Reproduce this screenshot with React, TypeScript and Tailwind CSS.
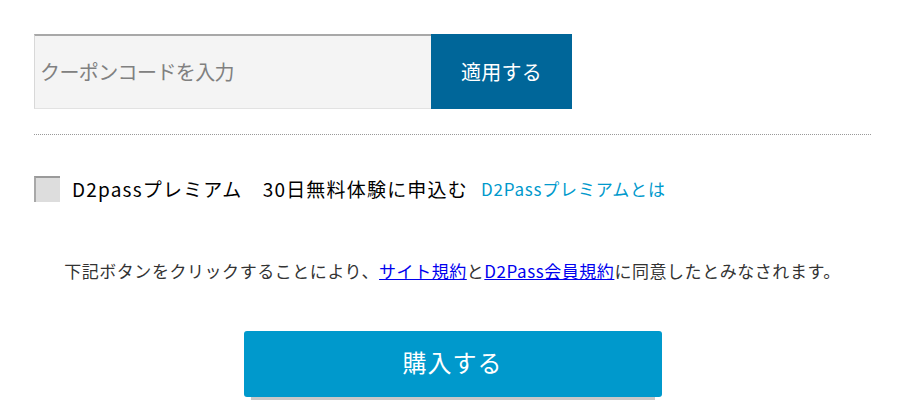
import React from "react";

export default function App() {
  return (
    <div
      className="w-[923px] h-[415px] bg-white overflow-hidden"
      style={{ fontFamily: '"Noto Sans CJK JP", "Noto Sans", sans-serif' }}
    >
      <div className="ml-[34px] w-[837px] pt-[34px]">
        <div className="flex h-[75px]">
          <div className="w-[397px] h-full bg-[#f4f4f4] border-t-2 border-t-[#a8a8a8] border-l border-l-[#d8d8d8] border-b border-b-[#e2e2e2] flex items-center pl-[5px]">
            <span className="text-[20px] text-[#808080] tracking-[-0.6px]">クーポンコードを入力</span>
          </div>
          <button className="w-[141px] h-full bg-[#006699] text-white text-[20px] tracking-[0.3px] flex items-center justify-center">
            適用する
          </button>
        </div>
        <div className="mt-[25px] border-t border-dotted border-[#999999]" />
        <div className="mt-[41px] flex items-center h-[26px]">
          <div className="w-[26px] h-[26px] bg-[#dddddd] border-t-2 border-l-2 border-t-[#9a9a9a] border-l-[#a8a8a8]" />
          <span className="ml-[12px] text-[19px] tracking-[1.2px] text-black">D2passプレミアム　30日無料体験に申込む</span>
          <span className="ml-[13px] text-[17px] tracking-[0.8px] text-[#0099cc]">D2Passプレミアムとは</span>
        </div>
        <div className="mt-[56px] text-center text-[17px] tracking-[0.55px] text-[#333333]">
          下記ボタンをクリックすることにより、
          <a className="text-[#0000ee] underline" href="#">サイト規約</a>
          と
          <a className="text-[#0000ee] underline" href="#">D2Pass会員規約</a>
          に同意したとみなされます。
        </div>
        <div className="mt-[47px] flex justify-center">
          <button className="w-[418px] h-[66px] pb-[3px] bg-[#0099cc] rounded-[3px] text-white text-[24px] tracking-[1px] shadow-[0_10px_0_-7px_#c8c8c8] flex items-center justify-center">
            購入する
          </button>
        </div>
      </div>
    </div>
  );
}
